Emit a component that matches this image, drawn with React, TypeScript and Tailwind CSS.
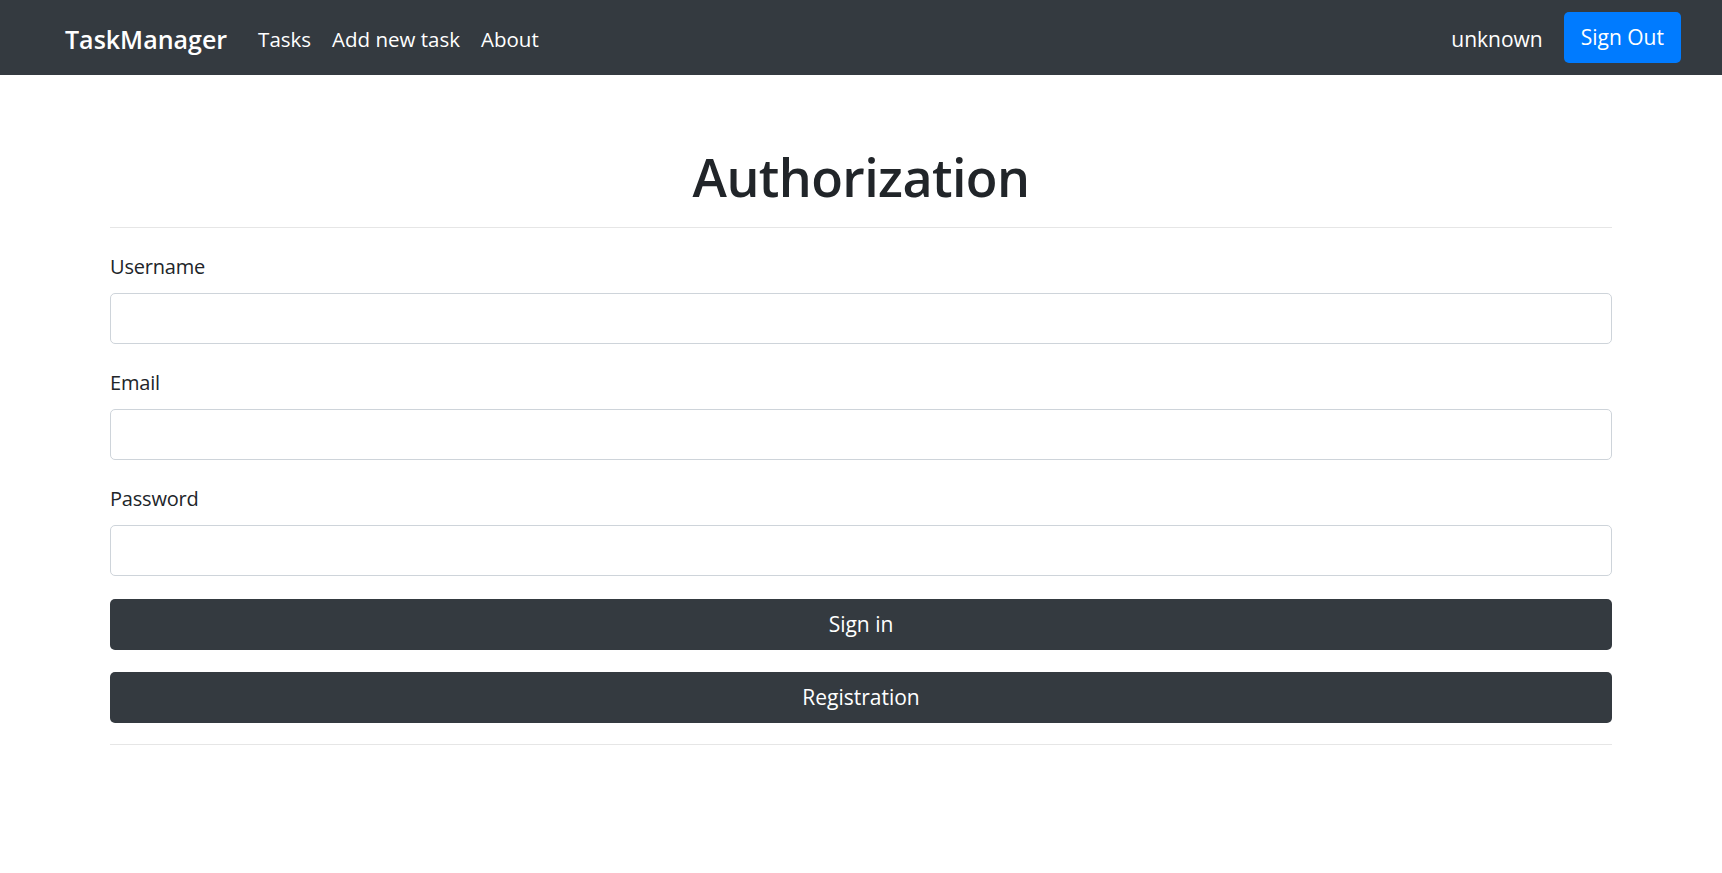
const font = "font-['Open_Sans','Noto_Sans',sans-serif]";

function Field({ label, type }: { label: string; type: string }) {
  return (
    <div className="mb-[23px]">
      <label className="mb-[10px] block text-[20px] leading-[32px] tracking-[-0.2px] text-[#212529]">{label}</label>
      <input
        type={type}
        className="block h-[51px] w-full rounded-[5px] border border-[#ced4da] bg-white px-4 text-[21px] outline-none"
      />
    </div>
  );
}

export default function App() {
  return (
    <div className={`min-h-screen bg-white ${font}`}>
      {/* navbar */}
      <nav className="flex h-[75px] items-center bg-[#343a40] pl-[65px] pr-[41px]">
        <span className="mr-[31px] pt-[4px] text-[25px] font-semibold text-white">TaskManager</span>
        <div className="flex items-center gap-[21px] pt-[4px] text-[20.5px] text-white">
          <a>Tasks</a>
          <a>Add new task</a>
          <a>About</a>
        </div>
        <div className="ml-auto flex items-center gap-[21px]">
          <span className="pt-[4px] text-[21px] text-white">unknown</span>
          <button className="h-[51px] rounded-[5px] bg-[#007bff] px-[17px] text-[21px] text-white">Sign Out</button>
        </div>
      </nav>

      {/* form */}
      <main className="mx-auto w-[1502px] pt-[68px]">
        <h1 className="text-center text-[52px] font-semibold leading-[67px] tracking-[-0.6px] text-[#212529]">Authorization</h1>
        <hr className="mt-[17px] mb-[23px] border-t border-[#e6e6e6]" />
        <Field label="Username" type="text" />
        <Field label="Email" type="email" />
        <Field label="Password" type="password" />
        <button className="block h-[51px] w-full rounded-[5px] bg-[#343a40] text-[21px] text-white">Sign in</button>
        <button className="mt-[22px] block h-[51px] w-full rounded-[5px] bg-[#343a40] text-[21px] text-white">Registration</button>
        <hr className="mt-[21px] border-t border-[#e6e6e6]" />
      </main>
    </div>
  );
}
